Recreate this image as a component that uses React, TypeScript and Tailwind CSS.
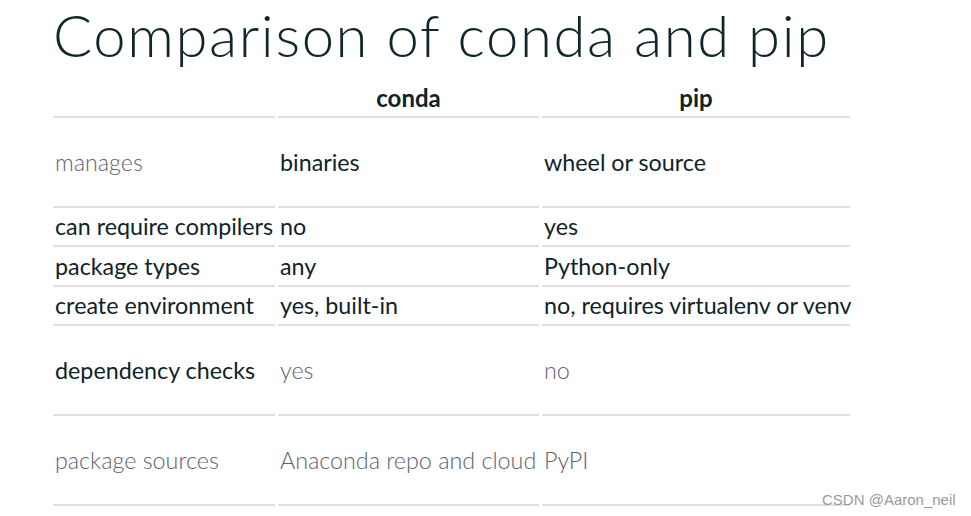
import React from "react";

const dark = "text-[#0e2428]";
const gray = "text-[#5e6070] font-light";

type Row = { h: string; cells: [string, string][] };

const rows: Row[] = [
  { h: "h-[90px]", cells: [["manages", gray], ["binaries", dark], ["wheel or source", dark]] },
  { h: "h-[39px]", cells: [["can require compilers", dark], ["no", dark], ["yes", dark]] },
  { h: "h-[40px]", cells: [["package types", dark], ["any", dark], ["Python-only", dark]] },
  { h: "h-[39px]", cells: [["create environment", dark], ["yes, built-in", dark], ["no, requires virtualenv or venv", dark]] },
  { h: "h-[90px]", cells: [["dependency checks", dark], ["yes", gray], ["no", gray]] },
  { h: "h-[90px]", cells: [["package sources", gray], ["Anaconda repo and cloud", gray], ["PyPI", gray]] },
];

export default function App() {
  return (
    <div className="relative w-[971px] h-[516px] bg-white overflow-hidden" style={{ fontFamily: "Lato, 'Open Sans', sans-serif" }}>
      <div className="pl-[53px]">
        <h1 className="text-[58px] leading-[70px] font-light text-[#10262a] tracking-[1.6px] whitespace-nowrap">
          Comparison of conda and pip
        </h1>
        <div className="grid grid-cols-[222px_261px_308px] gap-x-[3px] mt-[10px]">
          <div className="h-[38px] border-b-2 border-[#e0e0e0]"></div>
          <div className="h-[38px] border-b-2 border-[#e0e0e0] flex items-center justify-center text-[24px] font-bold text-[#0e2428]">conda</div>
          <div className="h-[38px] border-b-2 border-[#e0e0e0] flex items-center justify-center text-[24px] font-bold text-[#0e2428]">pip</div>
          {rows.map((r, i) =>
            r.cells.map(([t, c], j) => (
              <div
                key={i + "-" + j}
                className={`${r.h} border-b-2 border-[#e0e0e0] flex items-center pl-[2px] text-[23.3px] whitespace-nowrap ${c}`}
              >
                {t}
              </div>
            ))
          )}
        </div>
      </div>
      <div
        className="absolute left-[822px] top-[489px] text-[15px] text-[#9a9a9a]"
        style={{ fontFamily: "'Liberation Sans', Arial, sans-serif" }}
      >
        CSDN @Aaron_neil
      </div>
    </div>
  );
}
